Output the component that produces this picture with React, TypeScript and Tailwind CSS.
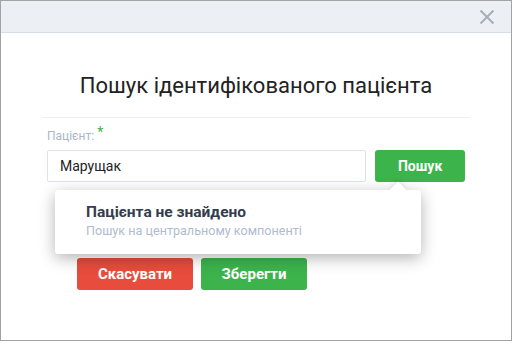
import React from 'react';

const CloseIcon: React.FC<{className?: string}> = ({className}) => (
  <svg xmlns="http://www.w3.org/2000/svg" className={className} viewBox="0 0 16 16" fill="none" stroke="currentColor">
    <path strokeWidth={2} d="M1.5 1.5l13 13M14.5 1.5l-13 13" />
  </svg>
);

const App: React.FC = () => {
  return (
    <div className="w-[512px] h-[341px] border border-[#a3a3a3] bg-white flex flex-col" style={{fontFamily: 'Roboto, "Noto Sans", sans-serif'}}>
      <div className="h-[32px] shrink-0 bg-[#ecf0f5] border-b border-[#d5dde9] flex items-center justify-end pr-[16px]">
        <CloseIcon className="w-[16px] h-[16px] text-[#a5aebb]" />
      </div>

      <div className="px-[42px]">
        <h1 className="text-center text-[22px] leading-[26px] text-[#222222] mt-[40px]">Пошук ідентифікованого пацієнта</h1>
        <div className="h-px bg-[#efefef] mt-[18px]" />

        <div className="px-[4px] mt-[10px]">
          <label className="block text-[12px] leading-[14px] text-[#a9b5c8]">
            Пацієнт: <span className="text-[#3cb44b] text-[14px] relative top-[-3px]">*</span>
          </label>
          <div className="flex gap-[9px] mt-[7px] relative">
            <div className="w-[320px] h-[32px] border border-[#dde3ec] rounded-[2px] flex items-center px-[12px] text-[14px] text-[#222]">
              Марущак
            </div>
            <button className="w-[90px] h-[32px] bg-[#3cb44b] rounded-[3px] text-white font-bold text-[14px]">Пошук</button>

            <div className="absolute left-[8px] top-[40px] w-[366px] h-[64px] bg-white rounded-[3px] shadow-[0_4px_16px_rgba(0,0,0,0.3)] pl-[31px] pt-[13px] z-10">
              <div className="absolute -top-[6px] left-[337px] w-[12px] h-[12px] bg-white rotate-45 shadow-[-2px_-2px_4px_rgba(0,0,0,0.08)]" />
              <div className="relative text-[15.5px] leading-[19px] font-bold text-[#333d4d]">Пацієнта не знайдено</div>
              <div className="relative text-[12.6px] leading-[16px] text-[#afbbcf] mt-[1px]">Пошук на центральному компоненті</div>
            </div>
          </div>

          <div className="flex gap-[8px] mt-[76px] ml-[30px]">
            <button className="w-[116px] h-[32px] bg-[#e74c3c] rounded-[3px] text-white font-bold text-[15px]">Скасувати</button>
            <button className="w-[106px] h-[32px] bg-[#3cb44b] rounded-[3px] text-white font-bold text-[15px]">Зберегти</button>
          </div>
        </div>
      </div>
    </div>
  );
};

export default App;
